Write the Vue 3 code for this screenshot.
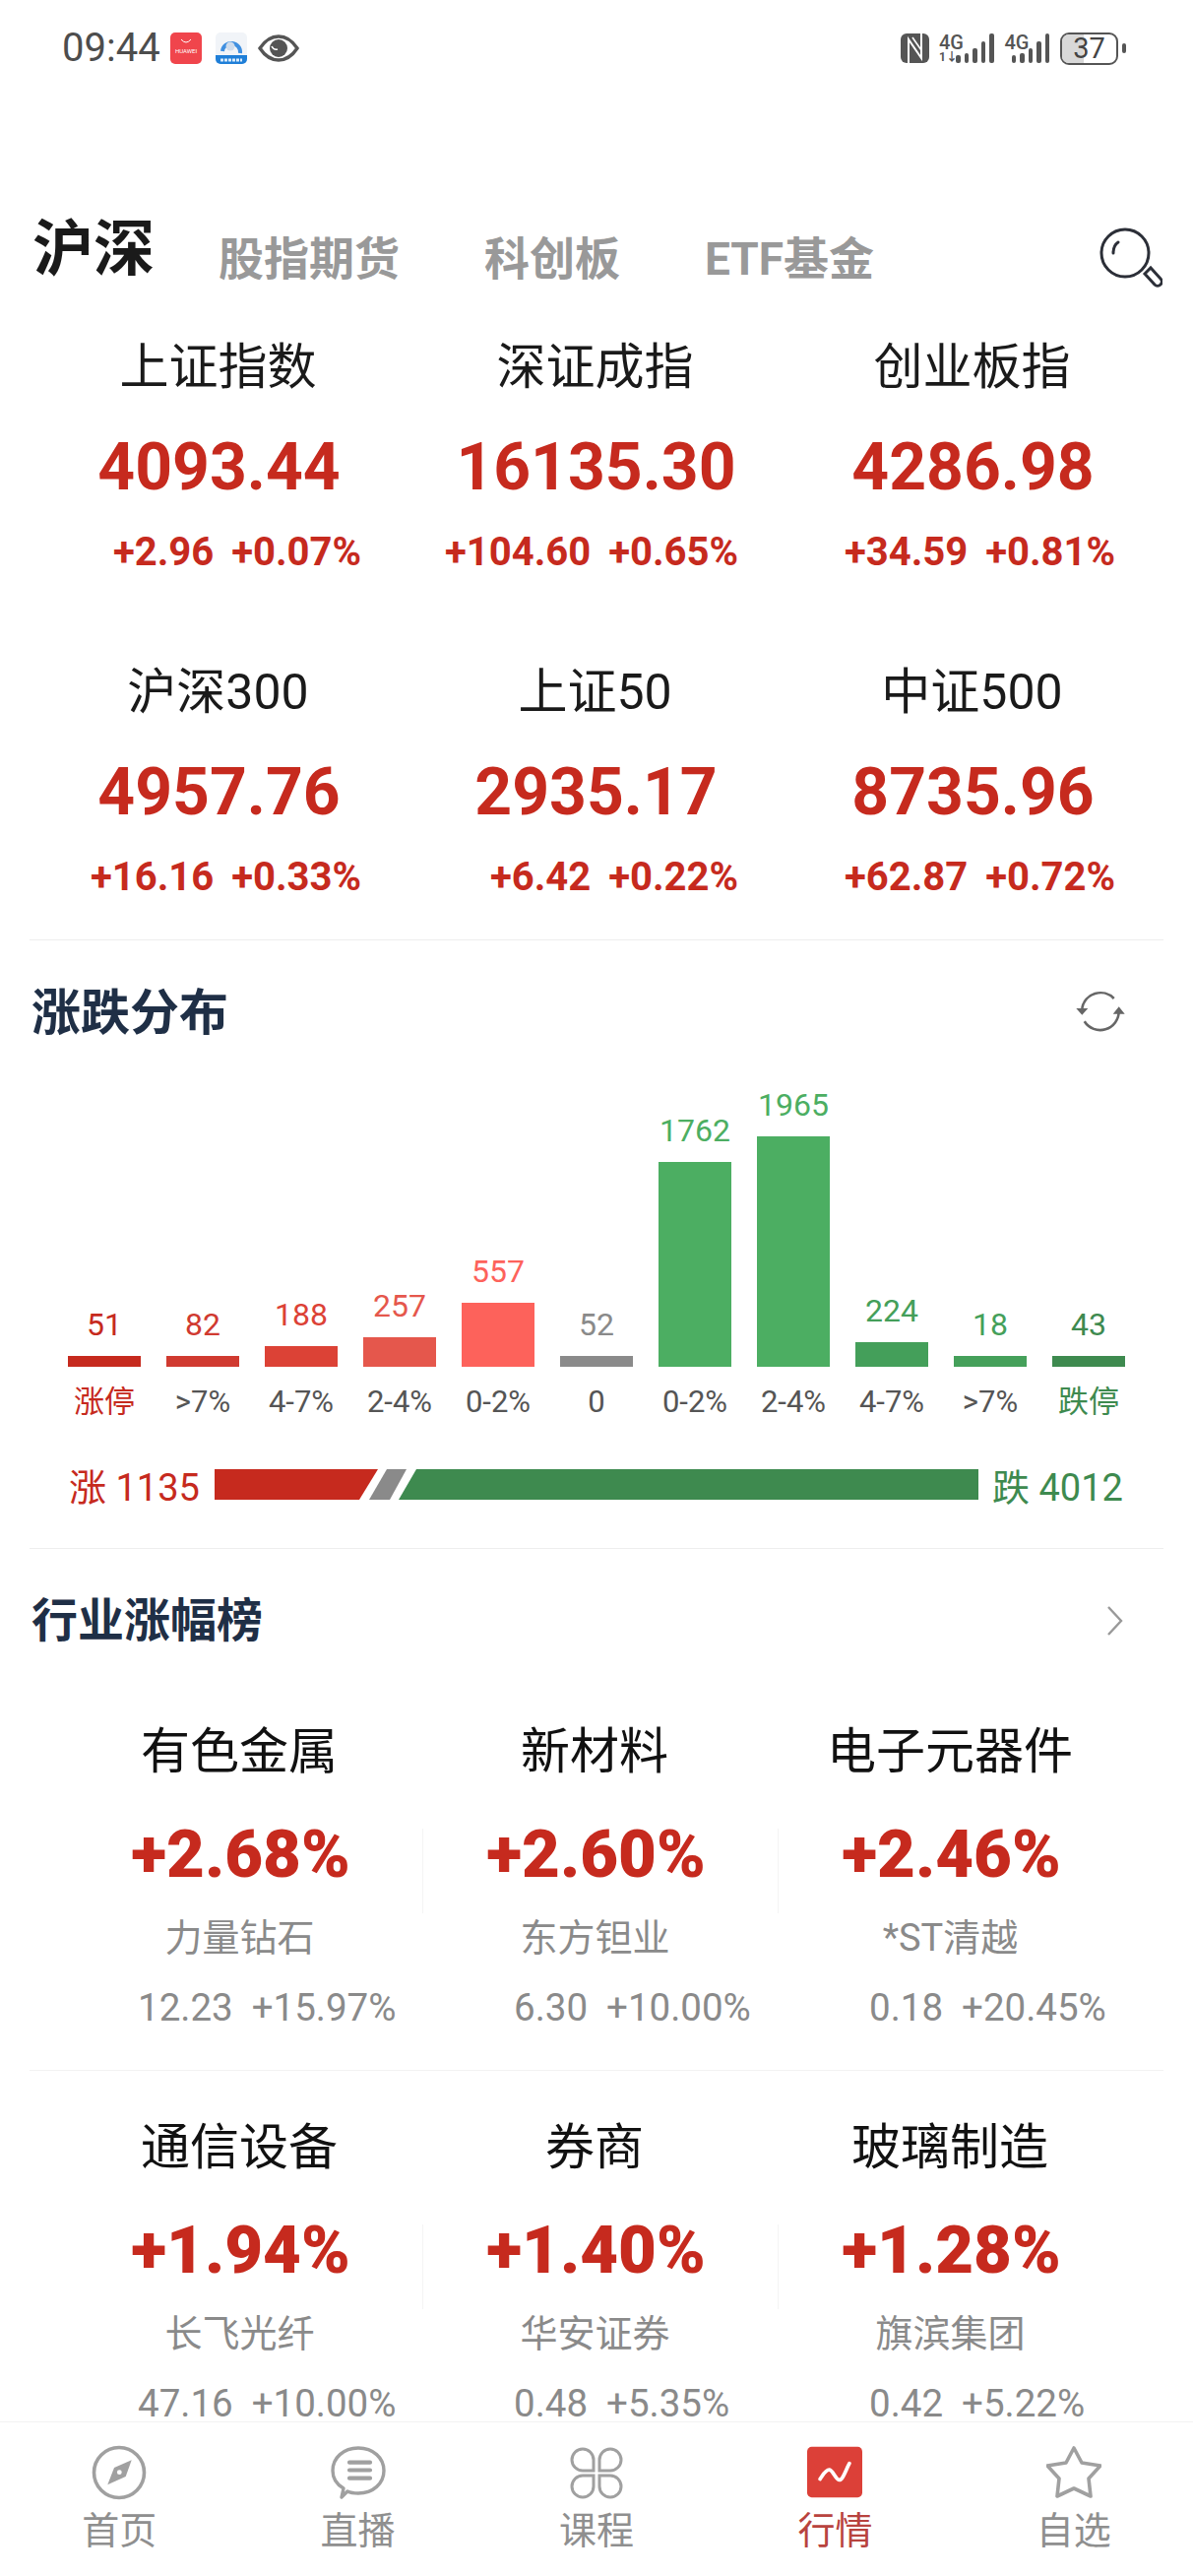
<script setup>
// 指数卡片
const indexes = [
  { name: "上证指数", value: "4093.44", diff: "+2.96", pct: "+0.07%" },
  { name: "深证成指", value: "16135.30", diff: "+104.60", pct: "+0.65%" },
  { name: "创业板指", value: "4286.98", diff: "+34.59", pct: "+0.81%" },
  { name: "沪深300", value: "4957.76", diff: "+16.16", pct: "+0.33%" },
  { name: "上证50", value: "2935.17", diff: "+6.42", pct: "+0.22%" },
  { name: "中证500", value: "8735.96", diff: "+62.87", pct: "+0.72%" },
];

// 涨跌分布
const bars = [
  { count: 51, label: "涨停", height: 11, color: "#c62a1e", labelColor: "#c62a1e" },
  { count: 82, label: ">7%", height: 11, color: "#d03a30", labelColor: "#555" },
  { count: 188, label: "4-7%", height: 21, color: "#dc4236", labelColor: "#555" },
  { count: 257, label: "2-4%", height: 30, color: "#e5574c", labelColor: "#555" },
  { count: 557, label: "0-2%", height: 65, color: "#fd625b", labelColor: "#555" },
  { count: 52, label: "0", height: 11, color: "#8a8a8a", labelColor: "#555" },
  { count: 1762, label: "0-2%", height: 208, color: "#4cae62", labelColor: "#555" },
  { count: 1965, label: "2-4%", height: 234, color: "#4cae62", labelColor: "#555" },
  { count: 224, label: "4-7%", height: 25, color: "#449f5a", labelColor: "#555" },
  { count: 18, label: ">7%", height: 11, color: "#45a05a", labelColor: "#555" },
  { count: 43, label: "跌停", height: 11, color: "#3e8a4f", labelColor: "#3e8a4f" },
];

// 行业涨幅榜，每行三个
const sectorRows = [
  [
    { name: "有色金属", pct: "+2.68%", stock: "力量钻石", price: "12.23", change: "+15.97%" },
    { name: "新材料", pct: "+2.60%", stock: "东方钽业", price: "6.30", change: "+10.00%" },
    { name: "电子元器件", pct: "+2.46%", stock: "*ST清越", price: "0.18", change: "+20.45%" },
  ],
  [
    { name: "通信设备", pct: "+1.94%", stock: "长飞光纤", price: "47.16", change: "+10.00%" },
    { name: "券商", pct: "+1.40%", stock: "华安证券", price: "0.48", change: "+5.35%" },
    { name: "玻璃制造", pct: "+1.28%", stock: "旗滨集团", price: "0.42", change: "+5.22%" },
  ],
];

const tabs = ["首页", "直播", "课程", "行情", "自选"];
const signalBars = [8, 10, 15, 22, 30];
</script>

<template>
  <div class="page">
    <div class="content">
      <div class="status-bar">
        <span class="time">09:44</span>
        <svg class="app-icon huawei" viewBox="0 0 32 32">
          <rect width="32" height="32" rx="5" fill="#f0454c" />
          <path d="M11 7q5 6 10 0" fill="none" stroke="#fff" stroke-width="1" />
          <text x="16" y="21" text-anchor="middle" font-size="6" fill="#fff">HUAWEI</text>
        </svg>
        <svg class="app-icon bank" viewBox="0 0 32 32">
          <rect width="32" height="32" rx="5" fill="#f1f4f8" />
          <path d="M0 23h32v4a5 5 0 0 1-5 5H5a5 5 0 0 1-5-5z" fill="#1f7fd8" />
          <path d="M7 19a9 9 0 1 1 18 2" fill="none" stroke="#3f8fe0" stroke-width="4" />
          <circle cx="15" cy="14" r="4.500" fill="#cfdcec" />
          <path d="M5 28h22" stroke="#dcecfb" stroke-width="3" stroke-dasharray="3 1" />
        </svg>
        <svg class="eye" viewBox="0 0 42 28">
          <path d="M2 14C8 5 14 2 21 2s13 3 19 12c-6 9-12 12-19 12S8 23 2 14z" fill="none" stroke="#555" stroke-width="3.4" />
          <circle cx="21" cy="14" r="9" fill="#555" />
          <path d="M14 12q2 4 6 3" fill="none" stroke="#fff" stroke-width="1.600" />
        </svg>
        <div class="status-right">
          <svg class="nfc" viewBox="0 0 29 30">
            <rect width="29" height="30" rx="6" fill="#555" />
            <path d="M8 30V6l13 19V0" fill="none" stroke="#fff" stroke-width="2" />
            <path d="M12 4l9 13" fill="none" stroke="#fff" stroke-width="1.600" />
          </svg>
          <div class="signal">
            <div class="net net-one"><span>4G</span><span class="updown">1↓</span></div>
            <i v-for="h in signalBars" :key="h" :style="{ height: h + 'px' }"></i>
          </div>
          <div class="signal">
            <div class="net net-two"><span>4G</span></div>
            <i v-for="h in signalBars" :key="h" :style="{ height: h + 'px' }"></i>
          </div>
          <div class="battery"><span class="battery-fill"></span><span class="battery-num">37</span></div>
          <span class="battery-nub"></span>
        </div>
      </div>

      <div class="top-tabs">
        <span class="tab-active">沪深</span>
        <span class="tab">股指期货</span>
        <span class="tab">科创板</span>
        <span class="tab">ETF基金</span>
        <svg class="search" viewBox="0 0 64 64">
          <circle cx="26" cy="27" r="24" fill="none" stroke="#2c2f38" stroke-width="3" />
          <path d="M14 27c0-5 2-9 5-11" fill="none" stroke="#2c2f38" stroke-width="3" stroke-linecap="round" />
          <path d="M46 48l6-6 10 11a4 4 0 0 1-6 6z" fill="none" stroke="#2c2f38" stroke-width="3" />
        </svg>
      </div>

      <div class="index-grid">
        <div v-for="item in indexes" :key="item.name" class="index-cell">
          <div class="index-name">{{ item.name }}</div>
          <div class="index-value">{{ item.value }}</div>
          <div class="index-change">
            <span>{{ item.diff }}</span>
            <span>{{ item.pct }}</span>
          </div>
        </div>
      </div>

      <div class="section">
        <div class="section-head">
          <span class="section-title">涨跌分布</span>
          <svg class="refresh" viewBox="0 0 52 50">
            <path d="M39.700 10A19 19 0 0 0 7.300 20M9.700 33.300A19 19 0 0 0 44.700 23" fill="none" stroke="#666" stroke-width="2.600" />
            <path d="M1.300 20h12L7.300 26.700zM38.700 25.700h12l-6-7.400z" fill="#666" />
          </svg>
        </div>

        <div class="chart">
          <div v-for="(bar, i) in bars" :key="i" class="chart-col">
            <span class="chart-count" :style="{ color: bar.color }">{{ bar.count }}</span>
            <div class="chart-bar" :style="{ height: bar.height + 'px', background: bar.color }"></div>
          </div>
        </div>
        <div class="chart-axis">
          <span v-for="(bar, i) in bars" :key="i" :style="{ color: bar.labelColor }">{{ bar.label }}</span>
        </div>

        <div class="ratio">
          <span class="ratio-up">涨 1135</span>
          <svg class="ratio-bar" viewBox="0 0 776 31" preserveAspectRatio="none">
            <polygon points="0,0 166,0 147,31 0,31" fill="#c62a1e" />
            <polygon points="175,0 195,0 178,31 157,31" fill="#8a8a8a" />
            <polygon points="205,0 776,0 776,31 187,31" fill="#3e8a4f" />
          </svg>
          <span class="ratio-down">跌 4012</span>
        </div>
      </div>

      <div class="section">
        <div class="section-head sector-head">
          <span class="section-title sector-title">行业涨幅榜</span>
          <svg class="chevron" viewBox="0 0 18 30">
            <path d="M2 1l13 14L2 29" fill="none" stroke="#999" stroke-width="2.400" />
          </svg>
        </div>

        <div v-for="(row, r) in sectorRows" :key="r" class="sector-row">
          <div v-for="(item, i) in row" :key="item.name" class="sector-cell" :class="{ 'has-line': i < 2 }">
            <div class="sector-name">{{ item.name }}</div>
            <div class="sector-pct">{{ item.pct }}</div>
            <div class="sector-stock">{{ item.stock }}</div>
            <div class="sector-line">
              <span>{{ item.price }}</span>
              <span>{{ item.change }}</span>
            </div>
          </div>
        </div>
      </div>
    </div>

    <nav class="bottom-nav">
      <div v-for="(tab, i) in tabs" :key="tab" class="nav-item" :class="{ active: i === 3 }">
        <svg v-if="i === 0" class="nav-icon" viewBox="0 0 56 56">
          <circle cx="28" cy="28" r="25.500" fill="none" stroke="#a0a0a0" stroke-width="3.600" />
          <path d="M40.700 15.300L34.700 32 16.300 40.300 23 23z" fill="#a0a0a0" />
          <circle cx="28.300" cy="27.700" r="2.400" fill="#fff" />
        </svg>
        <svg v-else-if="i === 1" class="nav-icon" viewBox="0 0 56 56">
          <path d="M13 44C6 40 2 33 2 26 2 13 13 3 28 3s26 10 26 23-11 23-26 23c-4 0-8-.5-11-2l-6 6z" fill="none" stroke="#a0a0a0" stroke-width="3.400" stroke-linejoin="round" />
          <path d="M19 17.700h21M19 25.500h21M19 33.700h21" stroke="#a0a0a0" stroke-width="4.200" stroke-linecap="round" />
        </svg>
        <svg v-else-if="i === 2" class="nav-icon" viewBox="0 0 56 56">
          <path d="M25 26H14a11 11 0 1 1 11-11zM31 26V15a11 11 0 1 1 11 11zM25 31v11a11 11 0 1 1-11-11zM31 31h11a11 11 0 1 1-11 11z" fill="none" stroke="#a0a0a0" stroke-width="3" />
        </svg>
        <svg v-else-if="i === 3" class="nav-icon" viewBox="0 0 60 56">
          <rect width="60" height="55" rx="5" fill="#dc4038" />
          <path d="M14 35c3-4 6-10 10-10 4 0 7 11 11 11 4 0 7-11 11-18" fill="none" stroke="#fff" stroke-width="4" stroke-linecap="round" />
        </svg>
        <svg v-else class="nav-icon" viewBox="0 0 56 56">
          <path d="M28 3l8 15 19 3-12 13 2 18-17-8-17 8 2-18L1 21l19-3z" fill="none" stroke="#a0a0a0" stroke-width="3.600" stroke-linejoin="round" />
        </svg>
        <span class="nav-label">{{ tab }}</span>
      </div>
    </nav>
  </div>
</template>

<style scoped>
.page {
  width: 1212px;
  height: 2616px;
  display: flex;
  flex-direction: column;
  overflow: hidden;
  background: #fff;
  font-family: Roboto, "Noto Sans CJK SC", sans-serif;
}

.content {
  flex: 1;
  min-height: 0;
  overflow: hidden;
}

/* 状态栏 */
.status-bar {
  height: 98px;
  padding-left: 63px;
  display: flex;
  align-items: center;
  color: #555;
}

.time {
  width: 98px;
  font-size: 40px;
  line-height: 1;
  color: #4d4d4d;
  white-space: nowrap;
}

.app-icon {
  width: 32px;
  height: 32px;
}

.huawei {
  margin-left: 12px;
}

.bank {
  margin-left: 14px;
}

.eye {
  width: 42px;
  height: 28px;
  margin-left: 11px;
}

.status-right {
  margin-left: auto;
  width: 297px;
  display: flex;
  align-items: center;
  flex-shrink: 0;
}

.nfc {
  width: 29px;
  height: 30px;
  margin-right: 10px;
}

.signal {
  display: flex;
  align-items: flex-end;
  gap: 4px;
  height: 30px;
  margin-right: 11px;
}

.signal i {
  display: block;
  width: 4.500px;
  border-radius: 2px;
  background: #555;
}

.net {
  width: 24px;
  display: flex;
  flex-direction: column;
  align-self: flex-start;
  font-size: 20px;
  line-height: 18px;
  font-weight: 500;
  color: #555;
}

.net-one {
  margin-right: -11px;
}

.net-two {
  margin-right: -21px;
}

.updown {
  font-size: 12px;
  line-height: 12px;
  font-weight: 700;
}

.battery {
  position: relative;
  width: 59px;
  height: 33px;
  border: 2px solid #555;
  border-radius: 9px;
  box-sizing: border-box;
  overflow: hidden;
  display: flex;
  align-items: center;
  justify-content: center;
}

.battery-fill {
  position: absolute;
  left: 0;
  top: 0;
  bottom: 0;
  width: 22px;
  background: #d8d8d8;
}

.battery-num {
  position: relative;
  font-size: 29px;
  line-height: 1;
  color: #444;
}

.battery-nub {
  width: 4px;
  height: 10px;
  margin-left: 4px;
  border-radius: 2px;
  background: #555;
}

/* 顶部标签 */
.top-tabs {
  height: 222px;
  box-sizing: border-box;
  padding: 0 31px 0 33px;
  display: flex;
  align-items: flex-start;
}

.tab-active {
  margin-top: 124px;
  width: 122px;
  font-size: 62px;
  line-height: 64px;
  font-weight: 700;
  color: #1a1a1a;
  white-space: nowrap;
}

.tab {
  margin-top: 135px;
  margin-left: 67px;
  font-size: 46px;
  line-height: 60px;
  font-weight: 700;
  color: #999;
}

.tab + .tab {
  margin-left: 86px;
}

.search {
  width: 64px;
  height: 64px;
  margin-top: 132px;
  margin-left: auto;
}

/* 指数 */
.index-grid {
  margin: 0 30px;
  display: grid;
  grid-template-columns: repeat(3, 383px);
  row-gap: 25px;
  height: 635px;
  box-sizing: border-box;
  border-bottom: 1px solid #eee;
}

.index-cell {
  height: 305px;
  text-align: center;
}

.index-name {
  margin-top: 23px;
  font-size: 50px;
  line-height: 60px;
  color: #1a1a1a;
}

.index-value {
  margin-top: 32px;
  padding-left: 2px;
  font-size: 66px;
  line-height: 80px;
  font-weight: 700;
  color: #c62a1e;
}

.index-change {
  margin-top: 21px;
  padding-right: 46px;
  display: flex;
  justify-content: flex-end;
  gap: 18px;
  font-size: 40px;
  line-height: 50px;
  font-weight: 700;
  color: #c62a1e;
  white-space: nowrap;
}

/* 区块 */
.section-head {
  height: 148px;
  padding: 0 68px 0 32px;
  display: flex;
  align-items: center;
  justify-content: space-between;
}

.sector-head {
  height: 146px;
}

.section-title {
  font-size: 50px;
  line-height: 60px;
  font-weight: 700;
  color: #1f2f46;
}

.sector-title {
  font-size: 47px;
}

.refresh {
  width: 52px;
  height: 50px;
}

.chevron {
  width: 18px;
  height: 30px;
  margin-right: 2px;
}

/* 涨跌分布 */
.chart {
  height: 285px;
  padding: 0 69px;
  display: flex;
  align-items: flex-end;
  justify-content: space-between;
}

.chart-col {
  width: 74px;
  display: flex;
  flex-direction: column;
  align-items: center;
}

.chart-count {
  font-size: 32px;
  line-height: 32px;
  margin-bottom: 16px;
}

.chart-bar {
  width: 100%;
}

.chart-axis {
  margin-top: 16px;
  padding: 0 69px;
  display: flex;
  justify-content: space-between;
}

.chart-axis span {
  width: 74px;
  text-align: center;
  white-space: nowrap;
  font-size: 31px;
  line-height: 40px;
}

.ratio {
  margin: 48px 30px 0;
  padding: 0 40px 49px;
  height: 31px;
  display: flex;
  align-items: center;
  border-bottom: 1px solid #eee;
  box-sizing: content-box;
  font-size: 38px;
}

.ratio-up {
  width: 148px;
  white-space: nowrap;
  color: #c62a1e;
}

.ratio-bar {
  width: 776px;
  height: 31px;
  flex-shrink: 0;
}

.ratio-down {
  margin-left: 14px;
  white-space: nowrap;
  color: #3e8a4f;
}

/* 行业涨幅榜 */
.sector-row {
  margin: 0 30px;
  padding: 30px 0 38px 32px;
  display: grid;
  grid-template-columns: repeat(3, 361px);
  border-bottom: 1px solid #f2f2f2;
}

.sector-row + .sector-row {
  padding-top: 48px;
}

.sector-cell {
  position: relative;
  text-align: center;
}

.has-line::after {
  content: "";
  position: absolute;
  right: -7px;
  top: 108px;
  height: 86px;
  width: 1px;
  background: #f4f4f4;
}

.sector-name {
  padding-left: 1px;
  font-size: 50px;
  line-height: 60px;
  color: #111;
}

.sector-pct {
  margin-top: 34px;
  padding-left: 4px;
  font-size: 67px;
  line-height: 80px;
  font-weight: 900;
  color: #c62a1e;
}

.sector-stock {
  margin-top: 20px;
  padding-left: 2px;
  font-size: 38px;
  line-height: 50px;
  color: #8a8a8a;
}

.sector-line {
  margin-top: 21px;
  padding-left: 99px;
  display: flex;
  gap: 19px;
  font-size: 38.500px;
  line-height: 50px;
  color: #8a8a8a;
  white-space: nowrap;
}

.sector-cell:first-child .sector-line {
  padding-left: 78px;
}

/* 底部导航 */
.bottom-nav {
  height: 157px;
  flex-shrink: 0;
  box-sizing: border-box;
  border-top: 1px solid #f2f2f2;
  background: #fff;
  display: grid;
  grid-template-columns: repeat(5, 1fr);
}

.nav-item {
  display: flex;
  flex-direction: column;
  align-items: center;
  padding-top: 23px;
}

.nav-icon {
  width: 56px;
  height: 56px;
}

.nav-label {
  margin-top: 6px;
  font-size: 38px;
  line-height: 50px;
  color: #8f8f8f;
}

.active .nav-label {
  color: #b8433e;
}
</style>

<style>
html,
body {
  margin: 0;
  background: #fff;
}
</style>
